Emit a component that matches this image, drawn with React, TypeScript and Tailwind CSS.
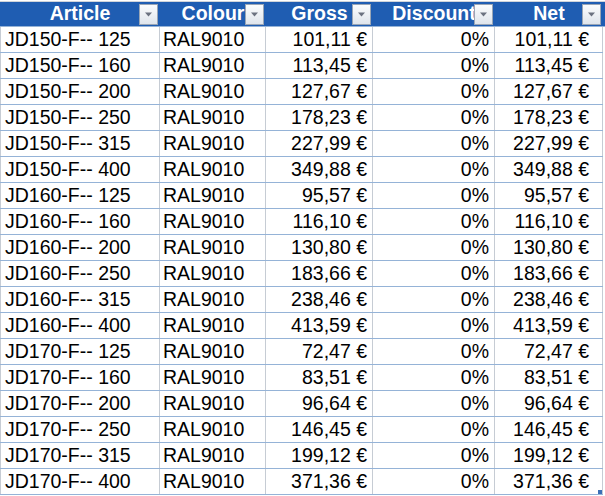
import React from "react";

const rows: [string, string, string, string][] = [
  ["JD150-F-- 125", "RAL9010", "101,11 €", "101,11 €"],
  ["JD150-F-- 160", "RAL9010", "113,45 €", "113,45 €"],
  ["JD150-F-- 200", "RAL9010", "127,67 €", "127,67 €"],
  ["JD150-F-- 250", "RAL9010", "178,23 €", "178,23 €"],
  ["JD150-F-- 315", "RAL9010", "227,99 €", "227,99 €"],
  ["JD150-F-- 400", "RAL9010", "349,88 €", "349,88 €"],
  ["JD160-F-- 125", "RAL9010", "95,57 €", "95,57 €"],
  ["JD160-F-- 160", "RAL9010", "116,10 €", "116,10 €"],
  ["JD160-F-- 200", "RAL9010", "130,80 €", "130,80 €"],
  ["JD160-F-- 250", "RAL9010", "183,66 €", "183,66 €"],
  ["JD160-F-- 315", "RAL9010", "238,46 €", "238,46 €"],
  ["JD160-F-- 400", "RAL9010", "413,59 €", "413,59 €"],
  ["JD170-F-- 125", "RAL9010", "72,47 €", "72,47 €"],
  ["JD170-F-- 160", "RAL9010", "83,51 €", "83,51 €"],
  ["JD170-F-- 200", "RAL9010", "96,64 €", "96,64 €"],
  ["JD170-F-- 250", "RAL9010", "146,45 €", "146,45 €"],
  ["JD170-F-- 315", "RAL9010", "199,12 €", "199,12 €"],
  ["JD170-F-- 400", "RAL9010", "371,36 €", "371,36 €"],
];

function DropBtn() {
  return (
    <div className="absolute right-[2px] top-[2px] w-[19px] h-[21px] border border-[#9aa6b6] bg-gradient-to-b from-[#fbfcfd] to-[#dfe5ec] flex items-center justify-center">
      <svg width="9" height="5" viewBox="0 0 9 5">
        <path d="M1 0.5 L8 0.5 L4.5 4.5 Z" fill="#6b7280" />
      </svg>
    </div>
  );
}

function HeadCell({ label, w }: { label: string; w: string }) {
  return (
    <div className={`relative ${w} h-full flex items-center justify-center`}>
      <span className="relative">{label}</span>
      <DropBtn />
    </div>
  );
}

export default function App() {
  return (
    <div
      className="w-[605px] h-[496px] bg-white overflow-hidden text-black"
      style={{ fontFamily: '"Liberation Sans", Arial, sans-serif' }}
    >
      <div className="h-[2px] border-b border-[#d0d4da]" />
      <div className="flex h-[25px] bg-[#1f5db2] text-white font-bold text-[19.5px] border-b border-[#95b3d7]">
        <HeadCell label="Article" w="w-[160px]" />
        <HeadCell label="Colour" w="w-[106px]" />
        <HeadCell label="Gross" w="w-[107px]" />
        <HeadCell label="Discount" w="w-[122px]" />
        <HeadCell label="Net" w="w-[108px]" />
      </div>
      <div className="w-[603px] relative">
        {rows.map((r, i) => (
          <div
            key={i}
            className="flex h-[26px] border-b border-[#95b3d7] text-[19.5px] leading-none"
          >
            <div className="w-[160px] border-l border-r border-l-[#c6ccd4] border-r-[#c6ccd4] flex items-center pl-[4px]">
              {r[0]}
            </div>
            <div className="w-[106px] border-r border-[#c6ccd4] flex items-center pl-[3px]">
              {r[1]}
            </div>
            <div className="w-[107px] border-r border-[#c6ccd4] flex items-center justify-end pr-[5px]">
              {r[2]}
            </div>
            <div className="w-[122px] border-r border-[#c6ccd4] flex items-center justify-end pr-[5px]">
              0%
            </div>
            <div className="w-[108px] border-r border-[#c6ccd4] flex items-center justify-end pr-[13px]">
              {r[3]}
            </div>
          </div>
        ))}
        <div className="absolute right-[1px] bottom-[1px] w-[4px] h-[4px] bg-[#3b6fb6]" />
      </div>
    </div>
  );
}
